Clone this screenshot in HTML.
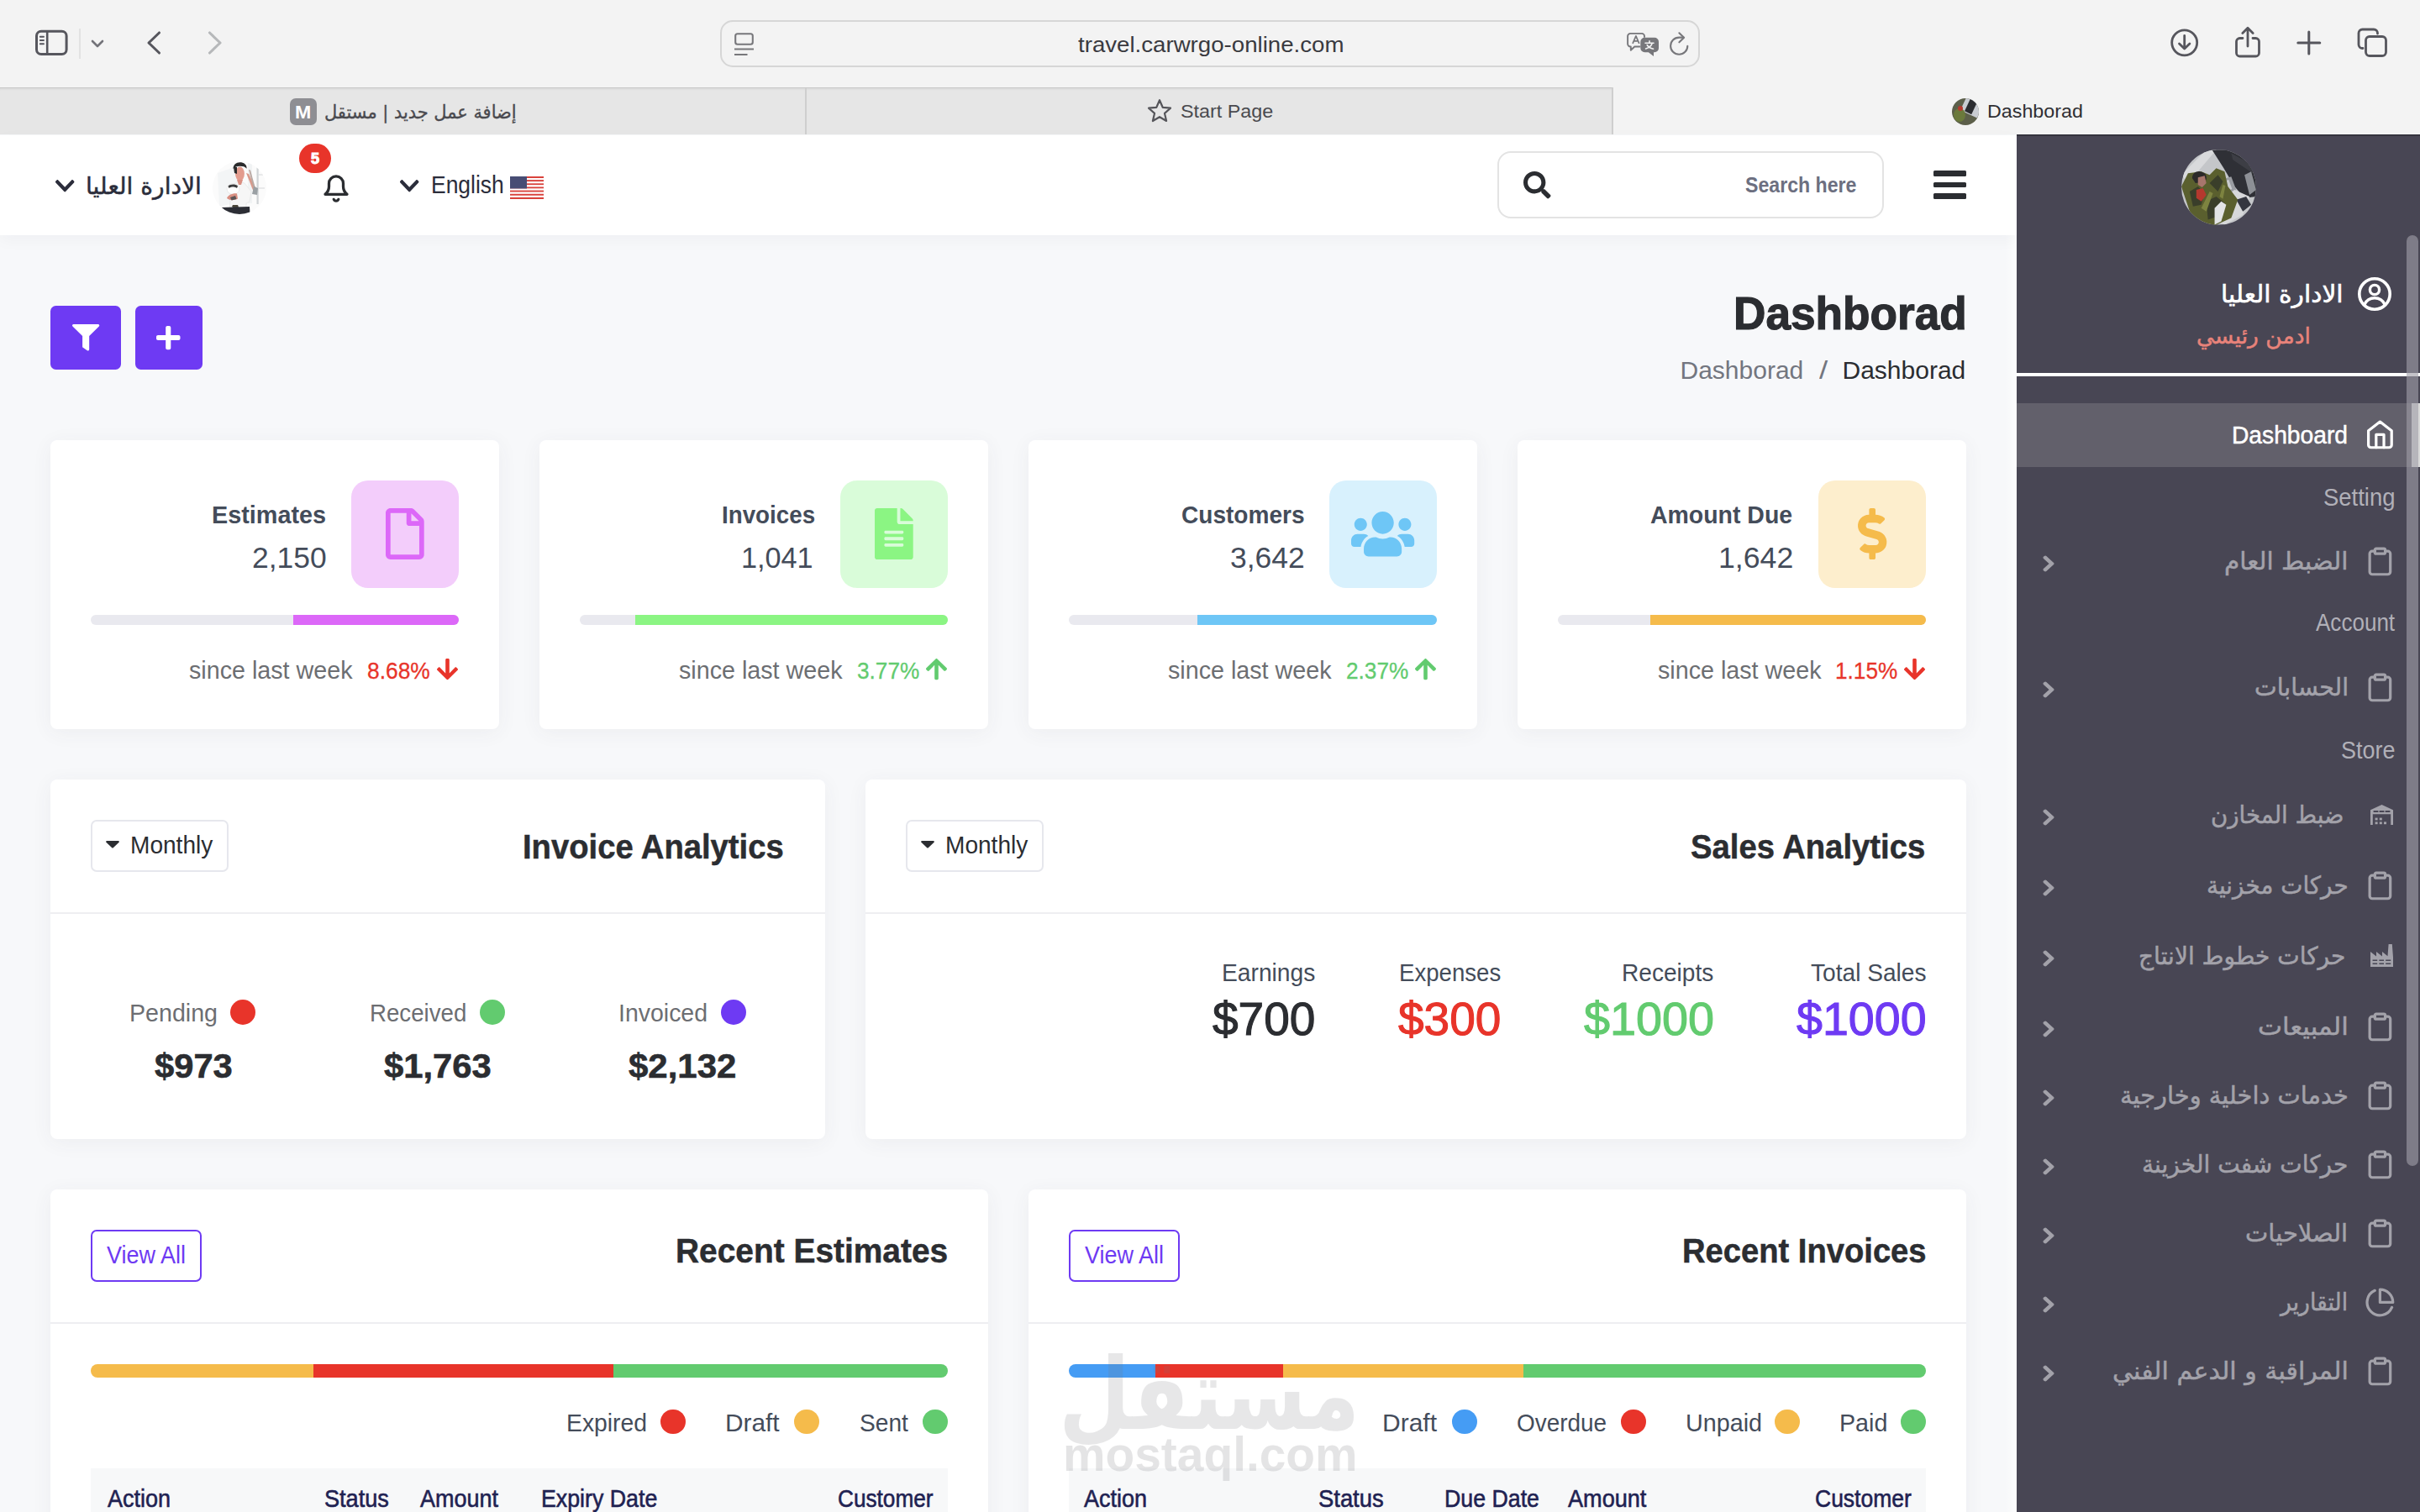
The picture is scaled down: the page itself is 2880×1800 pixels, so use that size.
<!DOCTYPE html>
<html lang="en"><head><meta charset="utf-8"><title>Dashborad</title>
<style>
*{margin:0;padding:0;box-sizing:border-box}
html,body{width:2880px;height:1800px;overflow:hidden;background:#f7f8fa}
body{position:relative;font-family:"Liberation Sans","DejaVu Sans",sans-serif}
.a{position:absolute;display:block}
.t{position:absolute;white-space:nowrap;line-height:1;transform-origin:0 0}
</style></head>
<body>
<header class="a browser-chrome" style="left:0;top:0">
<div class="a" style="left:0px;top:0px;width:2880px;height:104px;background:#f3f3f3;"></div>
<div class="a" style="left:0px;top:104px;width:2880px;height:56px;background:#f3f3f3;"></div>
<div class="a" style="left:0px;top:104px;width:1919px;height:56.5px;background:#e6e6e6;border-top:1.500px solid #c8c8c8;box-shadow:inset 0 3px 3px -2px rgba(0,0,0,.08);"></div>
<div class="a" style="left:958.2px;top:105px;width:1.7px;height:55px;background:#cfcfcf;"></div>
<div class="a" style="left:1918.3px;top:104px;width:1.7px;height:56px;background:#cfcfcf;"></div>
<div class="a" style="left:0px;top:159.6px;width:2880px;height:1.3px;background:#d0d0d0;"></div>
<svg class="a" style="left:40px;top:33px;" width="44" height="36" viewBox="0 0 44 36"><rect x="3.500" y="4.300" width="35.600" height="27.200" rx="5.500" fill="none" stroke="#56565d" stroke-width="3"/><path d="M16.200 5v26" stroke="#56565d" stroke-width="2.600" fill="none"/><path d="M7.800 10.700h4.200M7.800 15h4.200M7.800 19.300h4.200" stroke="#56565d" stroke-width="1.900" stroke-linecap="round" fill="none"/></svg>
<div class="a" style="left:94px;top:34px;width:2px;height:36px;background:#e2e2e2;"></div>
<svg class="a" style="left:106px;top:44px;" width="20" height="16" viewBox="0 0 20 16"><path d="M4 5l6 6 6-6" fill="none" stroke="#737379" stroke-width="2.600" stroke-linecap="round" stroke-linejoin="round"/></svg>
<svg class="a" style="left:170px;top:32px;" width="28" height="38" viewBox="0 0 28 38"><path d="M19.5 7L7 19l12.500 12" fill="none" stroke="#56565d" stroke-width="3.100" stroke-linecap="round" stroke-linejoin="round"/></svg>
<svg class="a" style="left:240.5px;top:32px;" width="28" height="38" viewBox="0 0 28 38"><path d="M8.500 7L21 19 8.500 31" fill="none" stroke="#b6b8ba" stroke-width="3.100" stroke-linecap="round" stroke-linejoin="round"/></svg>
<div class="a" style="left:857px;top:24px;width:1166px;height:56px;background:#f3f3f3;border-radius:15px;border:2px solid #d6d6d6;"></div>
<svg class="a" style="left:872px;top:36px;" width="28" height="32" viewBox="0 0 28 32"><rect x="3.200" y="4.200" width="20.600" height="12.600" rx="2.500" fill="none" stroke="#77777b" stroke-width="2.100"/><path d="M2 22.500h23M2 29h15.500" stroke="#77777b" stroke-width="2.100" fill="none"/></svg>
<span class="t" style="left:1283.2px;top:40.0px;font-size:26px;color:#3a3a40;transform:scaleX(1.063);">travel.carwrgo-online.com</span>
<svg class="a" style="left:1934px;top:36px;" width="42" height="34" viewBox="0 0 42 34"><path d="M17.500 19.500h-6.200l-4.500 4.300v-4.300h-0.500a3.200 3.200 0 0 1-3.200-3.200V7.100a3.200 3.200 0 0 1 3.200-3.200h13.500a3.200 3.200 0 0 1 3.200 3.200v1" fill="none" stroke="#77777b" stroke-width="1.900" stroke-linejoin="round" stroke-linecap="round"/><path d="M9 15.800l3.900-9 3.900 9M10.300 12.800h5.200" stroke="#77777b" stroke-width="1.700" fill="none" stroke-linejoin="round"/><path d="M23.300 8.700h11.700a5 5 0 0 1 5 5v7.600a5 5 0 0 1-5 5h-1v4.600l-6.200-4.600h-4.500a5 5 0 0 1-5-5v-7.600a5 5 0 0 1 5-5z" fill="#77777b"/><path d="M24 15.300h10M29 12.700v2.600M32.300 15.300c-1 3.600-3.700 5.600-7.700 6.700M26.200 17.500c1.400 2.500 4 4 7.400 4.700" stroke="#f3f3f3" stroke-width="1.600" fill="none" stroke-linecap="round"/></svg>
<svg class="a" style="left:1984px;top:34px;" width="30" height="36" viewBox="0 0 30 36"><path d="M24.300 20.700A10.100 10.100 0 1 1 14.200 10.600h5.200" fill="none" stroke="#77777b" stroke-width="2.100" stroke-linecap="round"/><path d="M14.400 5.300l5.700 5.400-5.700 5.600" fill="none" stroke="#77777b" stroke-width="2.100" stroke-linecap="round" stroke-linejoin="round"/></svg>
<svg class="a" style="left:2580px;top:32px;" width="40" height="38" viewBox="0 0 40 38"><circle cx="19.700" cy="18.800" r="15" fill="none" stroke="#56565d" stroke-width="2.800"/><path d="M19.700 10.500v15M13.500 20l6.200 6 6.200-6" fill="none" stroke="#56565d" stroke-width="2.800" stroke-linecap="round" stroke-linejoin="round"/></svg>
<svg class="a" style="left:2656px;top:28px;" width="38" height="44" viewBox="0 0 38 44"><path d="M13 17.500H9.500a4 4 0 0 0-4 4V35a4 4 0 0 0 4 4h19a4 4 0 0 0 4-4V21.500a4 4 0 0 0-4-4H25" fill="none" stroke="#56565d" stroke-width="2.800" stroke-linecap="round"/><path d="M19 27V5.500M12.800 11.500L19 5.300l6.200 6.200" fill="none" stroke="#56565d" stroke-width="2.800" stroke-linecap="round" stroke-linejoin="round"/></svg>
<svg class="a" style="left:2730px;top:34px;" width="36" height="34" viewBox="0 0 36 34"><path d="M17.800 4v26M4.800 17h26" stroke="#56565d" stroke-width="3" stroke-linecap="round" fill="none"/></svg>
<svg class="a" style="left:2802px;top:30px;" width="44" height="42" viewBox="0 0 44 42"><path d="M12.500 10.500V9a4.500 4.500 0 0 1 4.500-4.500h0M12.500 10.500" fill="none"/><path d="M10 27.500H9.500a4.500 4.500 0 0 1-4.500-4.500V9.500A4.500 4.500 0 0 1 9.500 5H23a4.500 4.500 0 0 1 4.500 4.500V10" fill="none" stroke="#56565d" stroke-width="2.800" stroke-linecap="round"/><rect x="13.500" y="13.500" width="24" height="23" rx="4.500" fill="#f3f3f3" stroke="#56565d" stroke-width="2.800"/></svg>
<div class="a" style="left:345px;top:117px;width:32px;height:32px;background:#8e8e93;border-radius:7px;"></div>
<span class="t" style="left:351.0px;top:123.4px;font-size:22.5px;color:#fff;font-weight:700;transform:scaleX(1.029);">M</span>
<span class="t" style="left:386.0px;top:122.5px;font-size:22px;color:#4a4a4f;font-family:'DejaVu Sans','Liberation Sans',sans-serif;transform:scaleX(0.951);-webkit-text-stroke:.35px #4a4a4f;">إضافة عمل جديد | مستقل</span>
<svg class="a" style="left:1363px;top:115px;" width="34" height="34" viewBox="0 0 34 34"><path d="M17 4.200l3.700 8.600 9.300.9-7 6.200 2.100 9.100L17 24.200 8.900 29l2.100-9.100-7-6.200 9.300-.9z" fill="none" stroke="#55555a" stroke-width="2.200" stroke-linejoin="round"/></svg>
<span class="t" style="left:1404.9px;top:122.2px;font-size:22px;color:#4a4a4f;transform:scaleX(1.061);">Start Page</span>
<div class="a" style="left:2323px;top:117px;width:32px;height:32px;border-radius:50%;overflow:hidden;background:#5c5f4a"><div class="a" style="left:14px;top:-4px;width:22px;height:24px;background:#c9ccd2;transform:rotate(25deg)"></div><div class="a" style="left:18px;top:2px;width:9px;height:16px;background:#2b2c30;transform:rotate(25deg)"></div><div class="a" style="left:2px;top:12px;width:14px;height:16px;border-radius:50%;background:#6b7a3c"></div><div class="a" style="left:7px;top:9px;width:6px;height:6px;border-radius:50%;background:#b63a2e"></div></div>
<span class="t" style="left:2365.4px;top:122.2px;font-size:22px;color:#2f2f33;transform:scaleX(1.058);">Dashborad</span>
</header>
<nav class="a topbar" style="left:0;top:0">
<div class="a" style="left:0px;top:160px;width:2400px;height:1640px;background:#f7f8fa;"></div>
<div class="a" style="left:2386px;top:280px;width:14px;height:1520px;background:linear-gradient(90deg,rgba(255,255,255,0),rgba(255,255,255,.75));"></div>
<div class="a" style="left:0px;top:161px;width:2400px;height:119px;background:#fff;box-shadow:0 6px 18px rgba(40,40,60,.035);"></div>
<svg class="a" style="left:66px;top:214.2px;overflow:visible" width="22.4" height="14.4" viewBox="5.7 123.5 436.6 265" preserveAspectRatio="none"><path fill="#2b2d3b" d="M207.029 381.476L12.686 187.132c-9.373-9.373-9.373-24.569 0-33.941l22.667-22.667c9.357-9.357 24.522-9.375 33.901-.04L224 284.505l154.745-154.021c9.379-9.335 24.544-9.317 33.901.04l22.667 22.667c9.373 9.373 9.373 24.569 0 33.941L240.971 381.476c-9.373 9.372-24.569 9.372-33.942 0z"/></svg>
<span class="t" style="left:102.0px;top:207.5px;font-size:28px;color:#2b2d3b;font-family:'DejaVu Sans','Liberation Sans',sans-serif;transform:scaleX(1.005);-webkit-text-stroke:.5px #2b2d3b;">الادارة العليا</span>
<div class="a" style="left:253px;top:192px;width:64px;height:63px;border-radius:50%;overflow:hidden">
<svg class="a" style="left:0px;top:0px;" width="64" height="63" viewBox="0 0 64 63"><g><rect width="64" height="63" fill="#fbfbfb"/><path d="M6 14L34 4v44L8 54z" fill="#f3f5f6"/><rect x="42" y="2" width="5" height="48" fill="#f1f3f4"/><rect x="52.500" y="5" width="2.200" height="46" fill="#cfd3d6"/><path d="M55 16h6M55 32h7" stroke="#d5d8da" stroke-width="1.200"/><path d="M20 61L22 30l8-6 8 2 8 10-2 12-4 2 0 12z" fill="#f6f6f6" stroke="#e6e7e8" stroke-width=".8"/><path d="M40 14l3 1 10 20-4 2z" fill="#d99a8c"/><path d="M43 10l2 .5 6 22-2 .5z" fill="#b9a8a2"/><path d="M49 30l5 2-1 8-6-1z" fill="#9aa0a4"/><ellipse cx="32.500" cy="15" rx="5.400" ry="8.500" fill="#e39c8e"/><path d="M29 22h7l-2 6h-3z" fill="#d98f82"/><path d="M24.500 9c0-5 3.500-7.800 8-7.800s8.500 2.600 8 7.600c-2-2.400-4.500-3-8-3s-6 1-8 3.200z" fill="#2a2b2c"/><path d="M25 7h4v8l-3-1z" fill="#2a2b2c"/><ellipse cx="24.500" cy="33" rx="7.500" ry="6.500" fill="#fdfdfd" stroke="#e4e4e4" stroke-width=".8"/><path d="M18.500 29.500c2-2.500 9-2.800 11.500 0l-1 2.500c-2.500-2-7-2-9.500 0z" fill="#3a3b3c"/><path d="M17 44c1-4 8-6.500 12-5.500l1 6c-4 2-9 2.500-13-.5z" fill="#d98f82"/><path d="M21 43l6-2 1.500 4-6 1.500z" fill="#5b5556"/><path d="M23 54c2 2 6 2.200 8 .5l-1-2.500h-6z" fill="#4a463a"/><path d="M10 55l34-1 .500 9H16z" fill="#2c2e35"/></g></svg>
</div>
<svg class="a" style="left:383px;top:204px;" width="34" height="38" viewBox="0 0 34 38"><path d="M4 27.300c2.800-2.200 4.500-5.300 4.500-9.300v-3.600a8.500 8.500 0 0 1 17 0V18c0 4 1.700 7.100 4.500 9.300z" fill="none" stroke="#2b2d31" stroke-width="3.300" stroke-linejoin="round"/><path d="M14.200 33.300a3 3 0 0 0 5.600 0" fill="none" stroke="#2b2d31" stroke-width="3.200" stroke-linecap="round"/></svg>
<div class="a" style="left:356px;top:171px;width:38px;height:35px;background:#e8342a;border-radius:19px;"></div>
<span class="t" style="left:370.0px;top:180.3px;font-size:18px;color:#fff;font-weight:700;-webkit-text-stroke:1px #fff;">5</span>
<svg class="a" style="left:476.2px;top:214px;overflow:visible" width="22.4" height="14.4" viewBox="5.7 123.5 436.6 265" preserveAspectRatio="none"><path fill="#2b2d3b" d="M207.029 381.476L12.686 187.132c-9.373-9.373-9.373-24.569 0-33.941l22.667-22.667c9.357-9.357 24.522-9.375 33.901-.04L224 284.505l154.745-154.021c9.379-9.335 24.544-9.317 33.901.04l22.667 22.667c9.373 9.373 9.373 24.569 0 33.941L240.971 381.476c-9.373 9.372-24.569 9.372-33.942 0z"/></svg>
<span class="t" style="left:512.7px;top:204.8px;font-size:30px;color:#2b2d3b;transform:scaleX(0.882);">English</span>
<svg class="a" style="left:607px;top:209.5px;" width="40" height="27" viewBox="0 0 40 27"><rect x="0" y="0.00" width="40" height="2.08" fill="#d9423c"/><rect x="0" y="2.08" width="40" height="2.08" fill="#fff"/><rect x="0" y="4.15" width="40" height="2.08" fill="#d9423c"/><rect x="0" y="6.23" width="40" height="2.08" fill="#fff"/><rect x="0" y="8.31" width="40" height="2.08" fill="#d9423c"/><rect x="0" y="10.38" width="40" height="2.08" fill="#fff"/><rect x="0" y="12.46" width="40" height="2.08" fill="#d9423c"/><rect x="0" y="14.54" width="40" height="2.08" fill="#fff"/><rect x="0" y="16.62" width="40" height="2.08" fill="#d9423c"/><rect x="0" y="18.69" width="40" height="2.08" fill="#fff"/><rect x="0" y="20.77" width="40" height="2.08" fill="#d9423c"/><rect x="0" y="22.85" width="40" height="2.08" fill="#fff"/><rect x="0" y="24.92" width="40" height="2.08" fill="#d9423c"/><rect x="0" y="0" width="20" height="14.500" fill="#484d74"/></svg>
<div class="a" style="left:1782px;top:180px;width:460px;height:80px;background:#fff;border-radius:16px;border:2px solid #e3e3e3;"></div>
<svg class="a" style="left:1813px;top:204px;overflow:visible" width="32.5" height="32.5" viewBox="0 0 512 512" preserveAspectRatio="none"><path fill="#2b2d31" d="M505 442.700L405.300 343c-4.500-4.500-10.600-7-17-7H372c27.600-35.300 44-79.700 44-128C416 93.100 322.900 0 208 0S0 93.100 0 208s93.100 208 208 208c48.300 0 92.700-16.400 128-44v16.300c0 6.400 2.500 12.500 7 17l99.700 99.700c9.400 9.400 24.600 9.400 33.900 0l28.300-28.300c9.400-9.400 9.400-24.600.1-34zM208 336c-70.700 0-128-57.200-128-128 0-70.700 57.200-128 128-128 70.700 0 128 57.200 128 128 0 70.700-57.200 128-128 128z"/></svg>
<span class="t" style="left:2077.0px;top:208.2px;font-size:25px;color:#6c6f80;font-weight:700;transform:scaleX(0.925);">Search here</span>
<div class="a" style="left:2301px;top:203px;width:39px;height:6.5px;background:#2b2d31;border-radius:1.5px;"></div>
<div class="a" style="left:2301px;top:216.5px;width:39px;height:6.5px;background:#2b2d31;border-radius:1.5px;"></div>
<div class="a" style="left:2301px;top:230px;width:39px;height:6.5px;background:#2b2d31;border-radius:1.5px;"></div>
<div class="a" style="left:60px;top:364px;width:84px;height:76px;background:#6e3af3;border-radius:6.5px;"></div>
<svg class="a" style="left:85.7px;top:386px;overflow:visible" width="32.3" height="31.6" viewBox="0 0 512 512" preserveAspectRatio="none"><path fill="#fff" d="M487.976 0H24.028C2.710 0-8.047 25.866 7.058 40.971L192 225.941V432c0 7.831 3.821 15.170 10.237 19.662l80 55.980C298.020 518.690 320 507.493 320 487.980V225.941l184.947-184.970C520.021 25.896 509.338 0 487.976 0z"/></svg>
<div class="a" style="left:161px;top:364px;width:80px;height:76px;background:#6e3af3;border-radius:6.5px;"></div>
<svg class="a" style="left:186.2px;top:387.9px;overflow:visible" width="28.5" height="28.2" viewBox="0 32 448 448" preserveAspectRatio="none"><path fill="#fff" d="M416 208H272V64c0-17.670-14.330-32-32-32h-32c-17.670 0-32 14.330-32 32v144H32c-17.670 0-32 14.330-32 32v32c0 17.670 14.330 32 32 32h144v144c0 17.670 14.330 32 32 32h32c17.670 0 32-14.330 32-32V304h144c17.670 0 32-14.330 32-32v-32c0-17.670-14.330-32-32-32z"/></svg>
<span class="t" style="left:2062.6px;top:345.5px;font-size:55px;color:#2b2d31;font-weight:700;transform:scaleX(0.967);-webkit-text-stroke:1.2px #2b2d31;">Dashborad</span>
<span class="t" style="left:1999.5px;top:425.5px;font-size:30px;color:#73767f;">Dashborad</span>
<span class="t" style="left:2164.5px;top:425.5px;font-size:30px;color:#73767f;transform:scaleX(1.222);">/</span>
<span class="t" style="left:2192.5px;top:425.5px;font-size:30px;color:#2b2d31;">Dashborad</span>
</nav>
<main class="a content" style="left:0;top:0">
<div class="a" style="left:60px;top:524px;width:534px;height:344px;background:#fff;border-radius:8px;box-shadow:0 4px 24px rgba(60,60,90,.06);"></div>
<div class="a" style="left:418px;top:572px;width:128px;height:128px;background:#f3cdfb;border-radius:20px;"></div>
<svg class="a" style="left:458.8px;top:605px;overflow:visible" width="45.7" height="61.0" viewBox="0 0 384 512" preserveAspectRatio="none"><path fill="#dc68f8" d="M369.900 97.900L286 14C277 5 264.800-.1 252.100-.1H48C21.500 0 0 21.500 0 48v416c0 26.500 21.500 48 48 48h288c26.500 0 48-21.500 48-48V131.900c0-12.700-5.100-25-14.100-34zM332.100 128H256V51.900l76.100 76.100zM48 464V48h160v104c0 13.300 10.700 24 24 24h104v288H48z"/></svg>
<span class="t" style="left:252.0px;top:599.3px;font-size:29px;color:#444c5a;font-weight:700;transform:scaleX(0.993);">Estimates</span>
<span class="t" style="left:299.6px;top:646.8px;font-size:34.5px;color:#444c5a;transform:scaleX(1.027);">2,150</span>
<div class="a" style="left:108px;top:732px;width:438px;height:12px;background:#e9e9ef;border-radius:6px;"></div>
<div class="a" style="left:348.7px;top:732px;width:197.3px;height:12px;background:#dc68f8;border-radius:0 6px 6px 0;"></div>
<span class="t" style="left:225.0px;top:782.5px;font-size:30px;color:#6c6e72;transform:scaleX(0.956);">since last week</span>
<span class="t" style="left:437.1px;top:784.7px;font-size:28px;color:#e8342a;transform:scaleX(0.942);-webkit-text-stroke:.3px #e8342a;">8.68%</span>
<svg class="a" style="left:520.3px;top:784.4px;overflow:visible" width="25.0" height="25.2" viewBox="5.7 32 436.6 448" preserveAspectRatio="none"><path fill="#e8342a" d="M413.100 222.500l22.200 22.200c9.400 9.400 9.400 24.600 0 33.900L241 473c-9.400 9.400-24.600 9.400-33.900 0L12.700 278.600c-9.400-9.400-9.400-24.600 0-33.900l22.200-22.200c9.500-9.500 25-9.300 34.300.4L184 343.400V56c0-13.300 10.700-24 24-24h32c13.300 0 24 10.700 24 24v287.400l114.800-120.500c9.300-9.800 24.800-10 34.300-.4z"/></svg>
<div class="a" style="left:642px;top:524px;width:534px;height:344px;background:#fff;border-radius:8px;box-shadow:0 4px 24px rgba(60,60,90,.06);"></div>
<div class="a" style="left:1000px;top:572px;width:128px;height:128px;background:#d9fcd9;border-radius:20px;"></div>
<svg class="a" style="left:1040.8px;top:605px;overflow:visible" width="45.7" height="61.0" viewBox="0 0 384 512" preserveAspectRatio="none"><path fill="#8bf583" d="M224 136V0H24C10.700 0 0 10.700 0 24v464c0 13.300 10.700 24 24 24h336c13.300 0 24-10.700 24-24V160H248c-13.200 0-24-10.800-24-24zm64 236c0 6.600-5.400 12-12 12H108c-6.600 0-12-5.400-12-12v-8c0-6.600 5.400-12 12-12h168c6.600 0 12 5.400 12 12v8zm0-64c0 6.600-5.400 12-12 12H108c-6.600 0-12-5.400-12-12v-8c0-6.600 5.400-12 12-12h168c6.600 0 12 5.400 12 12v8zm0-72v8c0 6.600-5.400 12-12 12H108c-6.600 0-12-5.400-12-12v-8c0-6.600 5.400-12 12-12h168c6.600 0 12 5.400 12 12zm96-114.100v6.100H256V0h6.100c6.400 0 12.500 2.500 17 7l97.900 98c4.500 4.500 7 10.600 7 16.900z"/></svg>
<span class="t" style="left:859.0px;top:599.3px;font-size:29px;color:#444c5a;font-weight:700;transform:scaleX(0.957);">Invoices</span>
<span class="t" style="left:882.0px;top:646.8px;font-size:34.5px;color:#444c5a;transform:scaleX(0.992);">1,041</span>
<div class="a" style="left:690px;top:732px;width:438px;height:12px;background:#e9e9ef;border-radius:6px;"></div>
<div class="a" style="left:755.5px;top:732px;width:372.5px;height:12px;background:#8bf583;border-radius:0 6px 6px 0;"></div>
<span class="t" style="left:807.5px;top:782.5px;font-size:30px;color:#6c6e72;transform:scaleX(0.956);">since last week</span>
<span class="t" style="left:1019.6px;top:784.7px;font-size:28px;color:#62cb6f;transform:scaleX(0.936);-webkit-text-stroke:.3px #62cb6f;">3.77%</span>
<svg class="a" style="left:1102.3px;top:784.4px;overflow:visible" width="25.0" height="25.2" viewBox="5.7 32 436.6 448" preserveAspectRatio="none"><path fill="#62cb6f" d="M34.900 289.500l-22.200-22.200c-9.400-9.400-9.400-24.600 0-33.900L207 39c9.400-9.400 24.600-9.400 33.900 0l194.300 194.300c9.400 9.400 9.400 24.600 0 33.900L413 289.400c-9.500 9.500-25 9.300-34.300-.4L264 168.600V456c0 13.300-10.700 24-24 24h-32c-13.300 0-24-10.700-24-24V168.600L69.200 289.100c-9.300 9.800-24.800 10-34.300.4z"/></svg>
<div class="a" style="left:1224px;top:524px;width:534px;height:344px;background:#fff;border-radius:8px;box-shadow:0 4px 24px rgba(60,60,90,.06);"></div>
<div class="a" style="left:1582px;top:572px;width:128px;height:128px;background:#d8f1fd;border-radius:20px;"></div>
<svg class="a" style="left:1607.8px;top:608.9px;overflow:visible" width="75.2" height="53.4" viewBox="0 32 640 448" preserveAspectRatio="none"><path fill="#6ec6f6" d="M96 224c35.300 0 64-28.700 64-64s-28.700-64-64-64-64 28.700-64 64 28.700 64 64 64zm448 0c35.300 0 64-28.700 64-64s-28.700-64-64-64-64 28.700-64 64 28.700 64 64 64zm32 32h-64c-17.600 0-33.500 7.100-45.100 18.600 40.300 22.100 68.900 62 75.100 109.400h66c17.700 0 32-14.300 32-32v-32c0-35.300-28.700-64-64-64zm-256 0c61.900 0 112-50.100 112-112S381.900 32 320 32 208 82.100 208 144s50.100 112 112 112zm76.800 32h-8.300c-20.800 10-43.900 16-68.500 16s-47.600-6-68.500-16h-8.300C179.600 288 128 339.600 128 403.200V432c0 26.500 21.500 48 48 48h288c26.500 0 48-21.500 48-48v-28.800c0-63.600-51.600-115.200-115.200-115.200zm-223.700-13.400C161.500 263.100 145.600 256 128 256H64c-35.300 0-64 28.700-64 64v32c0 17.700 14.300 32 32 32h65.900c6.300-47.400 34.900-87.300 75.200-109.400z"/></svg>
<span class="t" style="left:1405.5px;top:599.3px;font-size:29px;color:#444c5a;font-weight:700;transform:scaleX(0.967);">Customers</span>
<span class="t" style="left:1463.5px;top:646.8px;font-size:34.5px;color:#444c5a;transform:scaleX(1.028);">3,642</span>
<div class="a" style="left:1272px;top:732px;width:438px;height:12px;background:#e9e9ef;border-radius:6px;"></div>
<div class="a" style="left:1424.5px;top:732px;width:285.5px;height:12px;background:#6ec6f6;border-radius:0 6px 6px 0;"></div>
<span class="t" style="left:1389.5px;top:782.5px;font-size:30px;color:#6c6e72;transform:scaleX(0.956);">since last week</span>
<span class="t" style="left:1601.6px;top:784.7px;font-size:28px;color:#62cb6f;transform:scaleX(0.936);-webkit-text-stroke:.3px #62cb6f;">2.37%</span>
<svg class="a" style="left:1684.3px;top:784.4px;overflow:visible" width="25.0" height="25.2" viewBox="5.7 32 436.6 448" preserveAspectRatio="none"><path fill="#62cb6f" d="M34.900 289.500l-22.200-22.200c-9.400-9.400-9.400-24.600 0-33.900L207 39c9.400-9.400 24.600-9.400 33.900 0l194.300 194.300c9.400 9.400 9.400 24.600 0 33.900L413 289.400c-9.500 9.500-25 9.300-34.300-.4L264 168.600V456c0 13.300-10.700 24-24 24h-32c-13.300 0-24-10.700-24-24V168.600L69.200 289.100c-9.300 9.800-24.800 10-34.300.4z"/></svg>
<div class="a" style="left:1806px;top:524px;width:534px;height:344px;background:#fff;border-radius:8px;box-shadow:0 4px 24px rgba(60,60,90,.06);"></div>
<div class="a" style="left:2164px;top:572px;width:128px;height:128px;background:#fdeecd;border-radius:20px;"></div>
<svg class="a" style="left:2210.7px;top:605px;overflow:visible" width="34.4" height="61.1" viewBox="0 0 288 512" preserveAspectRatio="none"><path fill="#f5bb4b" d="M209.200 233.400l-108-31.600C88.700 198.200 80 186.500 80 173.500c0-16.300 13.200-29.500 29.500-29.500h66.300c12.200 0 24.200 3.700 34.200 10.500 6.100 4.100 14.300 3.100 19.500-2l34.800-34c7.100-6.900 6.100-18.400-1.800-24.500C238 74.800 207.400 64.100 176 64V16c0-8.800-7.200-16-16-16h-32c-8.800 0-16 7.200-16 16v48h-2.500C45.800 64-5.400 118.700.5 183.600c4.200 46.100 39.400 83.600 83.800 96.600l102.500 30c12.500 3.700 21.200 15.300 21.200 28.300 0 16.300-13.200 29.500-29.500 29.500h-66.300C100 368 88 364.300 78 357.500c-6.100-4.100-14.300-3.100-19.500 2l-34.800 34c-7.100 6.900-6.100 18.400 1.800 24.500 24.500 19.200 55.100 29.900 86.500 30v48c0 8.800 7.200 16 16 16h32c8.800 0 16-7.200 16-16v-48.200c46.600-.9 90.300-28.600 105.700-72.700 21.500-61.600-14.600-124.800-72.500-141.700z"/></svg>
<span class="t" style="left:1964.0px;top:599.3px;font-size:29px;color:#444c5a;font-weight:700;transform:scaleX(0.981);">Amount Due</span>
<span class="t" style="left:2044.9px;top:646.8px;font-size:34.5px;color:#444c5a;transform:scaleX(1.034);">1,642</span>
<div class="a" style="left:1854px;top:732px;width:438px;height:12px;background:#e9e9ef;border-radius:6px;"></div>
<div class="a" style="left:1963.5px;top:732px;width:328.5px;height:12px;background:#f5bb4b;border-radius:0 6px 6px 0;"></div>
<span class="t" style="left:1972.5px;top:782.5px;font-size:30px;color:#6c6e72;transform:scaleX(0.956);">since last week</span>
<span class="t" style="left:2183.6px;top:784.7px;font-size:28px;color:#e8342a;transform:scaleX(0.935);-webkit-text-stroke:.3px #e8342a;">1.15%</span>
<svg class="a" style="left:2266.3px;top:784.4px;overflow:visible" width="25.0" height="25.2" viewBox="5.7 32 436.6 448" preserveAspectRatio="none"><path fill="#e8342a" d="M413.100 222.500l22.200 22.200c9.400 9.400 9.400 24.600 0 33.900L241 473c-9.400 9.400-24.600 9.400-33.900 0L12.700 278.600c-9.400-9.400-9.400-24.600 0-33.900l22.200-22.200c9.500-9.500 25-9.300 34.300.4L184 343.400V56c0-13.300 10.700-24 24-24h32c13.300 0 24 10.700 24 24v287.400l114.800-120.500c9.300-9.800 24.800-10 34.300-.4z"/></svg>
<div class="a" style="left:60px;top:928px;width:922px;height:428px;background:#fff;border-radius:8px;box-shadow:0 4px 24px rgba(60,60,90,.06);"></div>
<div class="a" style="left:60px;top:1086px;width:922px;height:2px;background:#eeeef1;"></div>
<div class="a" style="left:108px;top:976px;width:164px;height:62px;background:#fff;border-radius:7px;border:2px solid #e6e7ed;"></div>
<svg class="a" style="left:126.4px;top:1000.7px;overflow:visible" width="16.0" height="8.6" viewBox="9.4 192 301.2 168.6" preserveAspectRatio="none"><path fill="#2b2d31" d="M31.300 192h257.300c17.800 0 26.700 21.500 14.100 34.100L174.100 354.800c-7.800 7.800-20.500 7.800-28.300 0L17.200 226.100C4.600 213.500 13.500 192 31.300 192z"/></svg>
<span class="t" style="left:154.6px;top:990.8px;font-size:30px;color:#2b2d31;transform:scaleX(0.936);">Monthly</span>
<span class="t" style="left:622.1px;top:987.5px;font-size:40px;color:#2b2d31;font-weight:700;transform:scaleX(0.955);-webkit-text-stroke:.5px #2b2d31;">Invoice Analytics</span>
<span class="t" style="left:153.6px;top:1190.5px;font-size:30px;color:#6c6e72;transform:scaleX(0.954);">Pending</span>
<div class="a" style="left:274px;top:1189.5px;width:30px;height:30px;background:#e8342a;border-radius:15px;"></div>
<span class="t" style="left:183.5px;top:1248.8px;font-size:40px;color:#2b2d31;font-weight:700;transform:scaleX(1.043);-webkit-text-stroke:.6px #2b2d31;">$973</span>
<span class="t" style="left:439.7px;top:1190.5px;font-size:30px;color:#6c6e72;transform:scaleX(0.922);">Received</span>
<div class="a" style="left:571px;top:1189.5px;width:30px;height:30px;background:#62cb6f;border-radius:15px;"></div>
<span class="t" style="left:457.0px;top:1248.8px;font-size:40px;color:#2b2d31;font-weight:700;transform:scaleX(1.045);-webkit-text-stroke:.6px #2b2d31;">$1,763</span>
<span class="t" style="left:735.6px;top:1190.5px;font-size:30px;color:#6c6e72;transform:scaleX(0.949);">Invoiced</span>
<div class="a" style="left:858px;top:1189.5px;width:30px;height:30px;background:#6e3af3;border-radius:15px;"></div>
<span class="t" style="left:748.0px;top:1248.8px;font-size:40px;color:#2b2d31;font-weight:700;transform:scaleX(1.049);-webkit-text-stroke:.6px #2b2d31;">$2,132</span>
<div class="a" style="left:1030px;top:928px;width:1310px;height:428px;background:#fff;border-radius:8px;box-shadow:0 4px 24px rgba(60,60,90,.06);"></div>
<div class="a" style="left:1030px;top:1086px;width:1310px;height:2px;background:#eeeef1;"></div>
<div class="a" style="left:1078px;top:976px;width:164px;height:62px;background:#fff;border-radius:7px;border:2px solid #e6e7ed;"></div>
<svg class="a" style="left:1096.4px;top:1000.7px;overflow:visible" width="16.0" height="8.6" viewBox="9.4 192 301.2 168.6" preserveAspectRatio="none"><path fill="#2b2d31" d="M31.300 192h257.300c17.800 0 26.700 21.500 14.100 34.100L174.100 354.800c-7.800 7.800-20.500 7.800-28.300 0L17.200 226.100C4.600 213.500 13.500 192 31.300 192z"/></svg>
<span class="t" style="left:1124.6px;top:990.8px;font-size:30px;color:#2b2d31;transform:scaleX(0.936);">Monthly</span>
<span class="t" style="left:2011.5px;top:987.5px;font-size:40px;color:#2b2d31;font-weight:700;transform:scaleX(0.956);-webkit-text-stroke:.5px #2b2d31;">Sales Analytics</span>
<span class="t" style="left:1453.6px;top:1142.5px;font-size:30px;color:#444c5a;transform:scaleX(0.940);">Earnings</span>
<span class="t" style="left:1443.0px;top:1186.0px;font-size:55px;color:#2b2d31;-webkit-text-stroke:1.1px #2b2d31;">$700</span>
<span class="t" style="left:1665.2px;top:1142.5px;font-size:30px;color:#444c5a;transform:scaleX(0.920);">Expenses</span>
<span class="t" style="left:1664.0px;top:1186.0px;font-size:55px;color:#e8342a;-webkit-text-stroke:1.1px #e8342a;">$300</span>
<span class="t" style="left:1930.1px;top:1142.5px;font-size:30px;color:#444c5a;transform:scaleX(0.937);">Receipts</span>
<span class="t" style="left:1884.5px;top:1186.0px;font-size:55px;color:#62cb6f;transform:scaleX(1.014);-webkit-text-stroke:1.1px #62cb6f;">$1000</span>
<span class="t" style="left:2154.5px;top:1142.5px;font-size:30px;color:#444c5a;transform:scaleX(0.937);">Total Sales</span>
<span class="t" style="left:2137.5px;top:1186.0px;font-size:55px;color:#6e3af3;transform:scaleX(1.011);-webkit-text-stroke:1.1px #6e3af3;">$1000</span>
<div class="a" style="left:60px;top:1416px;width:1116px;height:420px;background:#fff;border-radius:8px;box-shadow:0 4px 24px rgba(60,60,90,.06);"></div>
<div class="a" style="left:108px;top:1464px;width:132px;height:62px;background:#fff;border-radius:7px;border:2px solid #6e3af3;"></div>
<span class="t" style="left:126.5px;top:1478.5px;font-size:30px;color:#6e3af3;transform:scaleX(0.900);">View All</span>
<span class="t" style="left:804.1px;top:1468.5px;font-size:40px;color:#2b2d31;font-weight:700;transform:scaleX(0.972);-webkit-text-stroke:.5px #2b2d31;">Recent Estimates</span>
<div class="a" style="left:60px;top:1574px;width:1116px;height:2px;background:#eeeef1;"></div>
<div class="a" style="left:108px;top:1624px;width:1020px;height:16px;border-radius:8px;overflow:hidden"><div class="a" style="left:0px;top:0;width:265px;height:16px;background:#f5bb4b"></div><div class="a" style="left:265px;top:0;width:357px;height:16px;background:#e8342a"></div><div class="a" style="left:622px;top:0;width:398px;height:16px;background:#62cb6f"></div></div>
<span class="t" style="left:673.6px;top:1678.8px;font-size:30px;color:#444c5a;transform:scaleX(0.944);">Expired</span>
<div class="a" style="left:786.2px;top:1677.7px;width:29.5px;height:29.5px;background:#e8342a;border-radius:15px;"></div>
<span class="t" style="left:862.5px;top:1678.8px;font-size:30px;color:#444c5a;transform:scaleX(0.994);">Draft</span>
<div class="a" style="left:945.2px;top:1677.7px;width:29.5px;height:29.5px;background:#f5bb4b;border-radius:15px;"></div>
<span class="t" style="left:1022.6px;top:1678.8px;font-size:30px;color:#444c5a;transform:scaleX(0.937);">Sent</span>
<div class="a" style="left:1098.2px;top:1677.7px;width:29.5px;height:29.5px;background:#62cb6f;border-radius:15px;"></div>
<div class="a" style="left:108px;top:1748px;width:1020px;height:60px;background:#f7f8f9;"></div>
<span class="t" style="left:128.0px;top:1768.5px;font-size:30px;color:#1f2252;transform:scaleX(0.900);-webkit-text-stroke:.6px #1f2252;">Action</span>
<span class="t" style="left:385.6px;top:1768.5px;font-size:30px;color:#1f2252;transform:scaleX(0.904);-webkit-text-stroke:.6px #1f2252;">Status</span>
<span class="t" style="left:500.0px;top:1768.5px;font-size:30px;color:#1f2252;transform:scaleX(0.899);-webkit-text-stroke:.6px #1f2252;">Amount</span>
<span class="t" style="left:643.8px;top:1768.5px;font-size:30px;color:#1f2252;transform:scaleX(0.892);-webkit-text-stroke:.6px #1f2252;">Expiry Date</span>
<span class="t" style="left:997.1px;top:1768.5px;font-size:30px;color:#1f2252;transform:scaleX(0.873);-webkit-text-stroke:.6px #1f2252;">Customer</span>
<div class="a" style="left:1224px;top:1416px;width:1116px;height:420px;background:#fff;border-radius:8px;box-shadow:0 4px 24px rgba(60,60,90,.06);"></div>
<div class="a" style="left:1272px;top:1464px;width:132px;height:62px;background:#fff;border-radius:7px;border:2px solid #6e3af3;"></div>
<span class="t" style="left:1290.5px;top:1478.5px;font-size:30px;color:#6e3af3;transform:scaleX(0.900);">View All</span>
<span class="t" style="left:2001.6px;top:1468.5px;font-size:40px;color:#2b2d31;font-weight:700;transform:scaleX(0.954);-webkit-text-stroke:.5px #2b2d31;">Recent Invoices</span>
<div class="a" style="left:1224px;top:1574px;width:1116px;height:2px;background:#eeeef1;"></div>
<div class="a" style="left:1272px;top:1624px;width:1020px;height:16px;border-radius:8px;overflow:hidden"><div class="a" style="left:0px;top:0;width:102.5px;height:16px;background:#459cf4"></div><div class="a" style="left:102.5px;top:0;width:152.5px;height:16px;background:#e8342a"></div><div class="a" style="left:255px;top:0;width:286px;height:16px;background:#f5bb4b"></div><div class="a" style="left:541px;top:0;width:479px;height:16px;background:#62cb6f"></div></div>
<span class="t" style="left:1645.0px;top:1678.8px;font-size:30px;color:#444c5a;">Draft</span>
<div class="a" style="left:1728.2px;top:1677.7px;width:29.5px;height:29.5px;background:#459cf4;border-radius:15px;"></div>
<span class="t" style="left:1805.1px;top:1678.8px;font-size:30px;color:#444c5a;transform:scaleX(0.931);">Overdue</span>
<div class="a" style="left:1929.2px;top:1677.7px;width:29.5px;height:29.5px;background:#e8342a;border-radius:15px;"></div>
<span class="t" style="left:2005.6px;top:1678.8px;font-size:30px;color:#444c5a;transform:scaleX(0.958);">Unpaid</span>
<div class="a" style="left:2112.2px;top:1677.7px;width:29.5px;height:29.5px;background:#f5bb4b;border-radius:15px;"></div>
<span class="t" style="left:2189.1px;top:1678.8px;font-size:30px;color:#444c5a;transform:scaleX(0.955);">Paid</span>
<div class="a" style="left:2262.2px;top:1677.7px;width:29.5px;height:29.5px;background:#62cb6f;border-radius:15px;"></div>
<div class="a" style="left:1272px;top:1748px;width:1020px;height:60px;background:#f7f8f9;"></div>
<span class="t" style="left:1290.0px;top:1768.5px;font-size:30px;color:#1f2252;transform:scaleX(0.900);-webkit-text-stroke:.6px #1f2252;">Action</span>
<span class="t" style="left:1568.6px;top:1768.5px;font-size:30px;color:#1f2252;transform:scaleX(0.913);-webkit-text-stroke:.6px #1f2252;">Status</span>
<span class="t" style="left:1718.9px;top:1768.5px;font-size:30px;color:#1f2252;transform:scaleX(0.891);-webkit-text-stroke:.6px #1f2252;">Due Date</span>
<span class="t" style="left:1866.0px;top:1768.5px;font-size:30px;color:#1f2252;transform:scaleX(0.903);-webkit-text-stroke:.6px #1f2252;">Amount</span>
<span class="t" style="left:2160.1px;top:1768.5px;font-size:30px;color:#1f2252;transform:scaleX(0.883);-webkit-text-stroke:.6px #1f2252;">Customer</span>
<span class="t" style="left:1260.4px;top:1601.0px;font-size:118px;color:#77777c;font-weight:700;font-family:'DejaVu Sans','Liberation Sans',sans-serif;transform:scaleX(0.830);opacity:.17;">مستقل</span>
<span class="t" style="left:1265.1px;top:1701.5px;font-size:58px;color:#77777c;font-weight:700;transform:scaleX(0.980);opacity:.19;">mostaql.com</span>
</main>
<aside class="a sidebar" style="left:0;top:0">
<div class="a" style="left:2400px;top:160px;width:480px;height:1640px;background:#484654;"></div>
<div class="a" style="left:2400px;top:160px;width:480px;height:1.5px;background:#35343e;"></div>
<div class="a" style="left:2595.5px;top:178px;width:89px;height:90px;border-radius:50%;overflow:hidden">
<svg class="a" style="left:0px;top:0px;" width="89" height="90" viewBox="0 0 90 90"><g><rect width="90" height="90" fill="#c4c6c9"/><path d="M0 30L30 0h12L8 40z" fill="#d9dadc"/><path d="M37 0h53v56l-14 2-12-14-13-22z" fill="#2f3036"/><path d="M60 4l26 14v10L62 12z" fill="#3d3e45"/><path d="M76 30l8-4 6 22-8 6z" fill="#8d9096"/><path d="M48 36l12-4 6 16-10 6z" fill="#9a9da2"/><path d="M51 38l6-2 4 11-5 2z" fill="#c9cbce"/><path d="M44 62l20-14 18 8-8 22-22 12-14-6z" fill="#d7d8da"/><path d="M66 60l12-4 6 10-10 8z" fill="#34363f"/><path d="M0 44l8-16 16-2 10 4 8-8 10 4 4 18 12 16-8 22-22 10-26-12z" fill="#5a5f2e"/><path d="M10 50l10-6 8 8-4 14-10 2zM34 40l10-10 6 8-6 12zM30 62l12-6 10 8-8 16-12 4z" fill="#3a3e2a"/><path d="M24 70l10-20 4 2-8 22zM46 56l4-14 3 1-3 16z" fill="#7d8340"/><path d="M13 34c0-6 5-9 10-8s8 4 7 10l-5 3-8 1z" fill="#2c2a2a"/><path d="M20 33l8-2 2 9-5 5-5-3z" fill="#a8766c"/><path d="M18 48l8-2 4 8-6 8-6-4z" fill="#b5382e"/><path d="M40 70l8-8 6 4-6 20-8 4z" fill="#e3e4e6"/></g></svg>
</div>
<svg class="a" style="left:2804px;top:328px;" width="44" height="44" viewBox="0 0 44 44"><circle cx="22" cy="22" r="18.200" fill="none" stroke="#fff" stroke-width="3.600"/><circle cx="22" cy="17" r="5.600" fill="none" stroke="#fff" stroke-width="3.400"/><path d="M9.800 34.500c2.500-5.200 7-7.800 12.200-7.800s9.700 2.600 12.200 7.800" fill="none" stroke="#fff" stroke-width="3.400"/></svg>
<span class="t" style="left:2643.4px;top:336.3px;font-size:29px;color:#fff;font-family:'DejaVu Sans','Liberation Sans',sans-serif;transform:scaleX(1.025);-webkit-text-stroke:.6px #fff;">الادارة العليا</span>
<span class="t" style="left:2614.0px;top:387.2px;font-size:26.5px;color:#e8837a;font-family:'DejaVu Sans','Liberation Sans',sans-serif;-webkit-text-stroke:.5px #e8837a;">ادمن رئيسي</span>
<div class="a" style="left:2400px;top:444px;width:480px;height:4px;background:#fff;"></div>
<div class="a" style="left:2400px;top:480px;width:480px;height:76px;background:#62606b;"></div>
<div class="a" style="left:2870px;top:480px;width:10px;height:76px;background:#d9d9d9;"></div>
<span class="t" style="left:2656.1px;top:502.5px;font-size:30px;color:#fff;transform:scaleX(0.940);-webkit-text-stroke:.5px #fff;">Dashboard</span>
<svg class="a" style="left:2813.8px;top:499.4px;" width="36.84" height="36.84" viewBox="0 0 24 24"><g fill="none" stroke-width="2.100" stroke-linecap="round" stroke-linejoin="round" stroke="#fff"><path d="M3 9l9-7 9 7v11a2 2 0 0 1-2 2H5a2 2 0 0 1-2-2z"/><path d="M9 22V12h6v10"/></g></svg>
<span class="t" style="left:2765.1px;top:577.9px;font-size:29px;color:#b1b0b8;transform:scaleX(0.947);">Setting</span>
<span class="t" style="left:2755.5px;top:727.2px;font-size:29px;color:#b1b0b8;transform:scaleX(0.898);">Account</span>
<span class="t" style="left:2786.1px;top:878.9px;font-size:29px;color:#b1b0b8;transform:scaleX(0.930);">Store</span>
<svg class="a" style="left:2813.6px;top:649.6px;" width="36.84" height="36.84" viewBox="0 0 24 24"><g fill="none" stroke-width="2.100" stroke-linecap="round" stroke-linejoin="round" stroke="#a3a2aa"><path d="M16 4h2a2 2 0 0 1 2 2v14a2 2 0 0 1-2 2H6a2 2 0 0 1-2-2V6a2 2 0 0 1 2-2h2"/><rect x="8" y="2" width="8" height="4" rx="1" ry="1"/></g></svg>
<span class="t" style="left:2647.0px;top:653.7px;font-size:29px;color:#a3a2aa;font-family:'DejaVu Sans','Liberation Sans',sans-serif;transform:scaleX(1.016);-webkit-text-stroke:.5px #a3a2aa;">الضبط العام</span>
<svg class="a" style="left:2432px;top:661.5px;overflow:visible" width="12.0" height="18.0" viewBox="27.5 37.7 265 436.6" preserveAspectRatio="none"><path fill="#a3a2aa" d="M285.476 272.971L91.132 467.314c-9.373 9.373-24.569 9.373-33.941 0l-22.667-22.667c-9.357-9.357-9.375-24.522-.04-33.901L188.505 256 34.484 101.255c-9.335-9.379-9.317-24.544.04-33.901l22.667-22.667c9.373-9.373 24.569-9.373 33.941 0L285.475 239.030c9.373 9.372 9.373 24.568.001 33.941z" stroke="#a3a2aa" stroke-width="24.3" stroke-linejoin="round"/></svg>
<svg class="a" style="left:2813.6px;top:799.6px;" width="36.84" height="36.84" viewBox="0 0 24 24"><g fill="none" stroke-width="2.100" stroke-linecap="round" stroke-linejoin="round" stroke="#a3a2aa"><path d="M16 4h2a2 2 0 0 1 2 2v14a2 2 0 0 1-2 2H6a2 2 0 0 1-2-2V6a2 2 0 0 1 2-2h2"/><rect x="8" y="2" width="8" height="4" rx="1" ry="1"/></g></svg>
<span class="t" style="left:2682.5px;top:803.7px;font-size:29px;color:#a3a2aa;font-family:'DejaVu Sans','Liberation Sans',sans-serif;transform:scaleX(0.978);-webkit-text-stroke:.5px #a3a2aa;">الحسابات</span>
<svg class="a" style="left:2432px;top:811.5px;overflow:visible" width="12.0" height="18.0" viewBox="27.5 37.7 265 436.6" preserveAspectRatio="none"><path fill="#a3a2aa" d="M285.476 272.971L91.132 467.314c-9.373 9.373-24.569 9.373-33.941 0l-22.667-22.667c-9.357-9.357-9.375-24.522-.04-33.901L188.505 256 34.484 101.255c-9.335-9.379-9.317-24.544.04-33.901l22.667-22.667c9.373-9.373 24.569-9.373 33.941 0L285.475 239.030c9.373 9.372 9.373 24.568.001 33.941z" stroke="#a3a2aa" stroke-width="24.3" stroke-linejoin="round"/></svg>
<svg class="a" style="left:2820.5px;top:958.0px;" width="27" height="24" viewBox="0 0 27 24"><path d="M0 6.200L13.500 0 27 6.200V24h-2.800V11.200H2.800V24H0z" fill="#a3a2aa"/><path d="M3.600 8h5.800M10.600 8h5.800M17.600 8h5.800" stroke="#484654" stroke-width="1.800" fill="none"/><rect x="5.6" y="15.6" width="3" height="2.800" fill="#a3a2aa"/><rect x="10.8" y="15.6" width="3" height="2.800" fill="#a3a2aa"/><rect x="5.6" y="20.4" width="3" height="2.800" fill="#a3a2aa"/><rect x="10.8" y="20.4" width="3" height="2.800" fill="#a3a2aa"/><rect x="16" y="20.4" width="3" height="2.800" fill="#a3a2aa"/></svg>
<span class="t" style="left:2631.1px;top:955.7px;font-size:29px;color:#a3a2aa;font-family:'DejaVu Sans','Liberation Sans',sans-serif;transform:scaleX(0.951);-webkit-text-stroke:.5px #a3a2aa;">ضبط المخازن</span>
<svg class="a" style="left:2432px;top:963.5px;overflow:visible" width="12.0" height="18.0" viewBox="27.5 37.7 265 436.6" preserveAspectRatio="none"><path fill="#a3a2aa" d="M285.476 272.971L91.132 467.314c-9.373 9.373-24.569 9.373-33.941 0l-22.667-22.667c-9.357-9.357-9.375-24.522-.04-33.901L188.505 256 34.484 101.255c-9.335-9.379-9.317-24.544.04-33.901l22.667-22.667c9.373-9.373 24.569-9.373 33.941 0L285.475 239.030c9.373 9.372 9.373 24.568.001 33.941z" stroke="#a3a2aa" stroke-width="24.3" stroke-linejoin="round"/></svg>
<svg class="a" style="left:2813.6px;top:1035.6px;" width="36.84" height="36.84" viewBox="0 0 24 24"><g fill="none" stroke-width="2.100" stroke-linecap="round" stroke-linejoin="round" stroke="#a3a2aa"><path d="M16 4h2a2 2 0 0 1 2 2v14a2 2 0 0 1-2 2H6a2 2 0 0 1-2-2V6a2 2 0 0 1 2-2h2"/><rect x="8" y="2" width="8" height="4" rx="1" ry="1"/></g></svg>
<span class="t" style="left:2625.6px;top:1039.7px;font-size:29px;color:#a3a2aa;font-family:'DejaVu Sans','Liberation Sans',sans-serif;transform:scaleX(0.960);-webkit-text-stroke:.5px #a3a2aa;">حركات مخزنية</span>
<svg class="a" style="left:2432px;top:1047.5px;overflow:visible" width="12.0" height="18.0" viewBox="27.5 37.7 265 436.6" preserveAspectRatio="none"><path fill="#a3a2aa" d="M285.476 272.971L91.132 467.314c-9.373 9.373-24.569 9.373-33.941 0l-22.667-22.667c-9.357-9.357-9.375-24.522-.04-33.901L188.505 256 34.484 101.255c-9.335-9.379-9.317-24.544.04-33.901l22.667-22.667c9.373-9.373 24.569-9.373 33.941 0L285.475 239.030c9.373 9.372 9.373 24.568.001 33.941z" stroke="#a3a2aa" stroke-width="24.3" stroke-linejoin="round"/></svg>
<svg class="a" style="left:2820.5px;top:1124.2px;" width="27" height="27" viewBox="0 0 27 27"><path d="M0 27V9l7 5.500V9l7 5.500V9l6.500 5.200L21.600 0h4.200L27 15.500V27z" fill="#a3a2aa"/><path d="M2.600 19.200h5.600M10.400 19.200h5.600M18.200 19.200h6M2.600 23.200h5.600M10.400 23.200h5.600M18.200 23.200h6" stroke="#484654" stroke-width="1.600" fill="none"/></svg>
<span class="t" style="left:2544.6px;top:1123.7px;font-size:29px;color:#a3a2aa;font-family:'DejaVu Sans','Liberation Sans',sans-serif;transform:scaleX(0.967);-webkit-text-stroke:.5px #a3a2aa;">حركات خطوط الانتاج</span>
<svg class="a" style="left:2432px;top:1131.5px;overflow:visible" width="12.0" height="18.0" viewBox="27.5 37.7 265 436.6" preserveAspectRatio="none"><path fill="#a3a2aa" d="M285.476 272.971L91.132 467.314c-9.373 9.373-24.569 9.373-33.941 0l-22.667-22.667c-9.357-9.357-9.375-24.522-.04-33.901L188.505 256 34.484 101.255c-9.335-9.379-9.317-24.544.04-33.901l22.667-22.667c9.373-9.373 24.569-9.373 33.941 0L285.475 239.030c9.373 9.372 9.373 24.568.001 33.941z" stroke="#a3a2aa" stroke-width="24.3" stroke-linejoin="round"/></svg>
<svg class="a" style="left:2813.6px;top:1203.6px;" width="36.84" height="36.84" viewBox="0 0 24 24"><g fill="none" stroke-width="2.100" stroke-linecap="round" stroke-linejoin="round" stroke="#a3a2aa"><path d="M16 4h2a2 2 0 0 1 2 2v14a2 2 0 0 1-2 2H6a2 2 0 0 1-2-2V6a2 2 0 0 1 2-2h2"/><rect x="8" y="2" width="8" height="4" rx="1" ry="1"/></g></svg>
<span class="t" style="left:2686.9px;top:1207.7px;font-size:29px;color:#a3a2aa;font-family:'DejaVu Sans','Liberation Sans',sans-serif;transform:scaleX(1.064);-webkit-text-stroke:.5px #a3a2aa;">المبيعات</span>
<svg class="a" style="left:2432px;top:1215.5px;overflow:visible" width="12.0" height="18.0" viewBox="27.5 37.7 265 436.6" preserveAspectRatio="none"><path fill="#a3a2aa" d="M285.476 272.971L91.132 467.314c-9.373 9.373-24.569 9.373-33.941 0l-22.667-22.667c-9.357-9.357-9.375-24.522-.04-33.901L188.505 256 34.484 101.255c-9.335-9.379-9.317-24.544.04-33.901l22.667-22.667c9.373-9.373 24.569-9.373 33.941 0L285.475 239.030c9.373 9.372 9.373 24.568.001 33.941z" stroke="#a3a2aa" stroke-width="24.3" stroke-linejoin="round"/></svg>
<svg class="a" style="left:2813.6px;top:1285.6px;" width="36.84" height="36.84" viewBox="0 0 24 24"><g fill="none" stroke-width="2.100" stroke-linecap="round" stroke-linejoin="round" stroke="#a3a2aa"><path d="M16 4h2a2 2 0 0 1 2 2v14a2 2 0 0 1-2 2H6a2 2 0 0 1-2-2V6a2 2 0 0 1 2-2h2"/><rect x="8" y="2" width="8" height="4" rx="1" ry="1"/></g></svg>
<span class="t" style="left:2522.5px;top:1289.7px;font-size:29px;color:#a3a2aa;font-family:'DejaVu Sans','Liberation Sans',sans-serif;transform:scaleX(0.996);-webkit-text-stroke:.5px #a3a2aa;">خدمات داخلية وخارجية</span>
<svg class="a" style="left:2432px;top:1297.5px;overflow:visible" width="12.0" height="18.0" viewBox="27.5 37.7 265 436.6" preserveAspectRatio="none"><path fill="#a3a2aa" d="M285.476 272.971L91.132 467.314c-9.373 9.373-24.569 9.373-33.941 0l-22.667-22.667c-9.357-9.357-9.375-24.522-.04-33.901L188.505 256 34.484 101.255c-9.335-9.379-9.317-24.544.04-33.901l22.667-22.667c9.373-9.373 24.569-9.373 33.941 0L285.475 239.030c9.373 9.372 9.373 24.568.001 33.941z" stroke="#a3a2aa" stroke-width="24.3" stroke-linejoin="round"/></svg>
<svg class="a" style="left:2813.6px;top:1368.1px;" width="36.84" height="36.84" viewBox="0 0 24 24"><g fill="none" stroke-width="2.100" stroke-linecap="round" stroke-linejoin="round" stroke="#a3a2aa"><path d="M16 4h2a2 2 0 0 1 2 2v14a2 2 0 0 1-2 2H6a2 2 0 0 1-2-2V6a2 2 0 0 1 2-2h2"/><rect x="8" y="2" width="8" height="4" rx="1" ry="1"/></g></svg>
<span class="t" style="left:2549.1px;top:1372.2px;font-size:29px;color:#a3a2aa;font-family:'DejaVu Sans','Liberation Sans',sans-serif;transform:scaleX(0.967);-webkit-text-stroke:.5px #a3a2aa;">حركات شفت الخزينة</span>
<svg class="a" style="left:2432px;top:1380px;overflow:visible" width="12.0" height="18.0" viewBox="27.5 37.7 265 436.6" preserveAspectRatio="none"><path fill="#a3a2aa" d="M285.476 272.971L91.132 467.314c-9.373 9.373-24.569 9.373-33.941 0l-22.667-22.667c-9.357-9.357-9.375-24.522-.04-33.901L188.505 256 34.484 101.255c-9.335-9.379-9.317-24.544.04-33.901l22.667-22.667c9.373-9.373 24.569-9.373 33.941 0L285.475 239.030c9.373 9.372 9.373 24.568.001 33.941z" stroke="#a3a2aa" stroke-width="24.3" stroke-linejoin="round"/></svg>
<svg class="a" style="left:2813.6px;top:1450.1px;" width="36.84" height="36.84" viewBox="0 0 24 24"><g fill="none" stroke-width="2.100" stroke-linecap="round" stroke-linejoin="round" stroke="#a3a2aa"><path d="M16 4h2a2 2 0 0 1 2 2v14a2 2 0 0 1-2 2H6a2 2 0 0 1-2-2V6a2 2 0 0 1 2-2h2"/><rect x="8" y="2" width="8" height="4" rx="1" ry="1"/></g></svg>
<span class="t" style="left:2672.0px;top:1454.2px;font-size:29px;color:#a3a2aa;font-family:'DejaVu Sans','Liberation Sans',sans-serif;-webkit-text-stroke:.5px #a3a2aa;">الصلاحيات</span>
<svg class="a" style="left:2432px;top:1462px;overflow:visible" width="12.0" height="18.0" viewBox="27.5 37.7 265 436.6" preserveAspectRatio="none"><path fill="#a3a2aa" d="M285.476 272.971L91.132 467.314c-9.373 9.373-24.569 9.373-33.941 0l-22.667-22.667c-9.357-9.357-9.375-24.522-.04-33.901L188.505 256 34.484 101.255c-9.335-9.379-9.317-24.544.04-33.901l22.667-22.667c9.373-9.373 24.569-9.373 33.941 0L285.475 239.030c9.373 9.372 9.373 24.568.001 33.941z" stroke="#a3a2aa" stroke-width="24.3" stroke-linejoin="round"/></svg>
<svg class="a" style="left:2813.8px;top:1531.6px;" width="36.84" height="36.84" viewBox="0 0 24 24"><g fill="none" stroke-width="2.100" stroke-linecap="round" stroke-linejoin="round" stroke="#a3a2aa"><path d="M21.210 15.890A10 10 0 1 1 8 2.830"/><path d="M22 12A10 10 0 0 0 12 2v10z"/></g></svg>
<span class="t" style="left:2714.3px;top:1536.2px;font-size:29px;color:#a3a2aa;font-family:'DejaVu Sans','Liberation Sans',sans-serif;transform:scaleX(0.918);-webkit-text-stroke:.5px #a3a2aa;">التقارير</span>
<svg class="a" style="left:2432px;top:1544px;overflow:visible" width="12.0" height="18.0" viewBox="27.5 37.7 265 436.6" preserveAspectRatio="none"><path fill="#a3a2aa" d="M285.476 272.971L91.132 467.314c-9.373 9.373-24.569 9.373-33.941 0l-22.667-22.667c-9.357-9.357-9.375-24.522-.04-33.901L188.505 256 34.484 101.255c-9.335-9.379-9.317-24.544.04-33.901l22.667-22.667c9.373-9.373 24.569-9.373 33.941 0L285.475 239.030c9.373 9.372 9.373 24.568.001 33.941z" stroke="#a3a2aa" stroke-width="24.3" stroke-linejoin="round"/></svg>
<svg class="a" style="left:2813.6px;top:1614.1px;" width="36.84" height="36.84" viewBox="0 0 24 24"><g fill="none" stroke-width="2.100" stroke-linecap="round" stroke-linejoin="round" stroke="#a3a2aa"><path d="M16 4h2a2 2 0 0 1 2 2v14a2 2 0 0 1-2 2H6a2 2 0 0 1-2-2V6a2 2 0 0 1 2-2h2"/><rect x="8" y="2" width="8" height="4" rx="1" ry="1"/></g></svg>
<span class="t" style="left:2514.0px;top:1618.2px;font-size:29px;color:#a3a2aa;font-family:'DejaVu Sans','Liberation Sans',sans-serif;transform:scaleX(1.037);-webkit-text-stroke:.5px #a3a2aa;">المراقبة و الدعم الفني</span>
<svg class="a" style="left:2432px;top:1626px;overflow:visible" width="12.0" height="18.0" viewBox="27.5 37.7 265 436.6" preserveAspectRatio="none"><path fill="#a3a2aa" d="M285.476 272.971L91.132 467.314c-9.373 9.373-24.569 9.373-33.941 0l-22.667-22.667c-9.357-9.357-9.375-24.522-.04-33.901L188.505 256 34.484 101.255c-9.335-9.379-9.317-24.544.04-33.901l22.667-22.667c9.373-9.373 24.569-9.373 33.941 0L285.475 239.030c9.373 9.372 9.373 24.568.001 33.941z" stroke="#a3a2aa" stroke-width="24.3" stroke-linejoin="round"/></svg>
<div class="a" style="left:2864px;top:280px;width:13.5px;height:1108px;background:rgba(160,158,168,.62);border-radius:7px;"></div>
</aside>
<script>(function(){var w=window.innerWidth||2880;if(Math.abs(w-2880)>1){document.body.style.transformOrigin="0 0";document.body.style.transform="scale("+(w/2880)+")";}})();</script>
</body></html>
